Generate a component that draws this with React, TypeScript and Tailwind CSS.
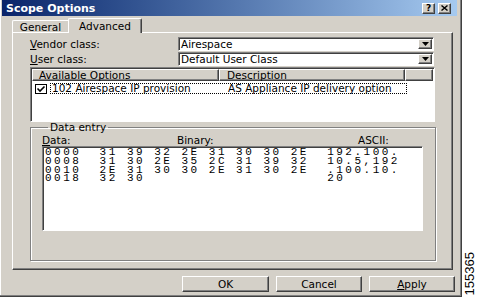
import React from 'react'

const raised =
  'border border-t-white border-l-white border-r-[#404040] border-b-[#404040] shadow-[inset_-1px_-1px_0_#808080]'
const sunken =
  'border border-t-[#808080] border-l-[#808080] border-r-white border-b-white shadow-[inset_1px_1px_0_#404040]'

function Arrow() {
  return (
    <svg width="7" height="4" viewBox="0 0 7 4">
      <path d="M0 0h7L3.5 4z" fill="#000" />
    </svg>
  )
}

function Combo({ value }: { value: string }) {
  return (
    <div className={`${sunken} w-[256px] h-[14px] bg-white flex items-center`}>
      <span className="flex-1 pl-[2px] leading-none">{value}</span>
      <div className={`${raised} bg-[#d4d0c8] w-[14px] h-[10px] mr-px flex items-center justify-center`}>
        <Arrow />
      </div>
    </div>
  )
}

const rows = [
  '0000  31 39 32 2E 31 30 30 2E  192.100.',
  '0008  31 30 2E 35 2C 31 39 32  10.5,192',
  '0010  2E 31 30 30 2E 31 30 2E  .100.10.',
  '0018  32 30                    20',
]

export default function App() {
  return (
    <div className="w-[477px] h-[298px] bg-white flex font-['DejaVu_Sans',sans-serif] text-[10.5px] text-black">
      {/* window */}
      <div className="w-[462px] h-[297px] bg-[#d4d0c8] border-r border-b border-r-[#404040] border-b-[#404040] shadow-[inset_-1px_-1px_0_#808080,inset_1px_0_0_#fff] pl-[2px] flex flex-col">
        {/* title bar */}
        <div className="w-[455px] h-[16px] bg-gradient-to-r from-[#0a246a] to-[#a6caf0] flex items-center pl-[4px] pr-[6px]">
          <span className="flex-1 text-white font-bold text-[11px] leading-none">Scope Options</span>
          <div className="flex gap-[3px]">
            <div className={`${raised} bg-[#d4d0c8] w-[13px] h-[11px] flex items-center justify-center text-[9px] font-bold leading-none`}>?</div>
            <div className={`${raised} bg-[#d4d0c8] w-[13px] h-[11px] flex items-center justify-center`}>
              <svg width="7" height="6" viewBox="0 0 7 6">
                <path d="M0.5 0.5l6 5M6.5 0.5l-6 5" stroke="#000" strokeWidth="1.4" />
              </svg>
            </div>
          </div>
        </div>

        {/* tabs */}
        <div className="mt-[2px] h-[14px] pl-[10px] flex items-end">
          <div className="w-[56px] h-[12px] border-t border-l border-t-white border-l-white rounded-tl-[2px] flex items-center justify-center pt-px leading-none">
            General
          </div>
          <div className="relative z-10 -mb-px w-[74px] h-[15px] bg-[#d4d0c8] border-t border-l border-r border-t-white border-l-white border-r-[#404040] shadow-[inset_-1px_0_0_#808080] rounded-t-[2px] flex items-center justify-center leading-none">
            Advanced
          </div>
        </div>

        {/* tab page */}
        <div className={`${raised} ml-[10px] w-[441px] h-[238px] pl-[17px] pr-[17px] pt-[4px] flex flex-col`}>
          <div className="flex items-center h-[14px]">
            <span className="w-[148px] leading-none">
              <span className="underline">V</span>endor class:
            </span>
            <Combo value="Airespace" />
          </div>
          <div className="flex items-center h-[14px] mt-px">
            <span className="w-[148px] leading-none">
              <span className="underline">U</span>ser class:
            </span>
            <Combo value="Default User Class" />
          </div>

          {/* options list */}
          <div className={`${sunken} mt-px h-[55px] w-[405px] bg-white p-px flex flex-col`}>
            <div className="flex h-[12px] bg-[#d4d0c8]">
              <div className={`${raised} w-[187px] pl-[6px] flex items-center leading-none`}>Available Options</div>
              <div className={`${raised} w-[186px] pl-[7px] flex items-center leading-none`}>Description</div>
              <div className={`${raised} flex-1`} />
            </div>
            <div className="flex items-center mt-[2px] h-[11px]">
              <svg width="12" height="10" viewBox="0 0 12 10" className="ml-[3px] mr-[3px]">
                <rect x="0.5" y="0.5" width="11" height="9" fill="#fff" stroke="#000" />
                <path d="M2.5 4.5l2.5 2.5 4.5-4.5" fill="none" stroke="#000" strokeWidth="1.6" />
              </svg>
              <div className="w-[357px] h-[11px] border border-dotted border-black flex items-center leading-none">
                <span className="w-[177px] pl-px">102 Airespace IP provision</span>
                <span>AS Appliance IP delivery option</span>
              </div>
            </div>
          </div>

          {/* data entry */}
          <fieldset className="h-[139px] w-[406px] border border-[#808080] shadow-[1px_1px_0_#fff,inset_1px_1px_0_#fff] pl-[11px] pr-[11px]">
            <legend className="ml-[6px] px-[2px] leading-[10px]">Data entry</legend>
            <div className="flex mt-[3px] h-[10px] items-center leading-none">
              <span className="w-[135px]">
                <span className="underline">D</span>ata:
              </span>
              <span className="w-[181px]">Binary:</span>
              <span>ASCII:</span>
            </div>
            <div className={`${sunken} mt-[1px] w-[381px] h-[85px] bg-white pl-[2px] pt-[1px] font-['Liberation_Mono',monospace] text-[11px] tracking-[2.5px] leading-[8.8px] whitespace-pre`}>
              {rows.map((r) => (
                <div key={r}>{r}</div>
              ))}
            </div>
          </fieldset>
        </div>

        {/* buttons */}
        <div className="mt-[6px] flex justify-end gap-[7px] pr-[6px]">
          <div className={`${raised} w-[87px] h-[16px] flex items-center justify-center leading-none`}>OK</div>
          <div className={`${raised} w-[86px] h-[16px] flex items-center justify-center leading-none`}>Cancel</div>
          <div className={`${raised} w-[86px] h-[16px] flex items-center justify-center leading-none`}>
            <span>
              <span className="underline">A</span>pply
            </span>
          </div>
        </div>
      </div>

      {/* figure number */}
      <div className="flex-1 flex flex-col items-center justify-end pb-[3px]">
        <span className="[writing-mode:vertical-rl] rotate-180 font-['Liberation_Sans',sans-serif] text-[13px] leading-none">
          155365
        </span>
      </div>
    </div>
  )
}
